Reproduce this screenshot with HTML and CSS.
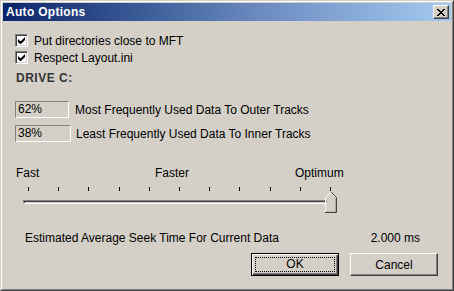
FILE: index.html
```html
<!DOCTYPE html>
<html lang="en">
<head>
    <meta charset="UTF-8">
    <title>Auto Options</title>
    <link rel="stylesheet" href="styles.css">
</head>
<body>

<div class="window">
    <div class="window-inner">
        <div class="titlebar">
            <span class="title">Auto Options</span>
            <span class="close-btn">
                <svg width="8" height="7" viewBox="0 0 8 7">
                    <path d="M0 0h2v1h-2z M6 0h2v1h-2z M1 1h2v1h-2z M5 1h2v1h-2z M2 2h4v1h-4z M3 3h2v1h-2z M2 4h4v1h-4z M1 5h2v1h-2z M5 5h2v1h-2z M0 6h2v1h-2z M6 6h2v1h-2z" fill="#000"/>
                </svg>
            </span>
        </div>

        <div class="content">
            <!-- OPTIONS -->
            <div class="check-row">
                <span class="checkbox"><svg width="7" height="7" viewBox="0 0 7 7"><path d="M0 2v3l2 2h1l4-4v-3l-4 4h-1z" fill="#000"/></svg></span>
                <span>Put directories close to MFT</span>
            </div>
            <div class="check-row">
                <span class="checkbox"><svg width="7" height="7" viewBox="0 0 7 7"><path d="M0 2v3l2 2h1l4-4v-3l-4 4h-1z" fill="#000"/></svg></span>
                <span>Respect Layout.ini</span>
            </div>

            <div class="drive">DRIVE C:</div>

            <div class="pct-row">
                <span class="pct-box">62%</span>
                <span>Most Frequently Used Data To Outer Tracks</span>
            </div>
            <div class="pct-row">
                <span class="pct-box wide">38%</span>
                <span>Least Frequently Used Data To Inner Tracks</span>
            </div>

            <!-- SLIDER -->
            <div class="slider-labels">
                <span class="lbl-fast">Fast</span>
                <span class="lbl-faster">Faster</span>
                <span>Optimum</span>
            </div>
            <div class="ticks">
                <i></i><i></i><i></i><i></i><i></i><i></i><i></i><i></i><i></i><i></i><i></i>
            </div>
            <div class="slider">
                <div class="track"></div>
                <svg class="thumb" width="12" height="21" viewBox="0 0 12 21">
                    <path d="M0.5 20.5V5.5L5.5 0.5L10.5 5.5" fill="none" stroke="#fff"/>
                    <path d="M1 20h10V6" fill="none" stroke="#808080" stroke-width="1"/>
                    <path d="M0 20.5h11.5V5.5L6 0" fill="none" stroke="#404040"/>
                    <path d="M1.5 19.5V6L5.5 2L9.5 6V19.5z" fill="#d4d0c8"/>
                </svg>
            </div>

            <div class="seek-row">
                <span>Estimated Average Seek Time For Current Data</span>
                <span>2.000 ms</span>
            </div>

            <!-- TOMBOL -->
            <div class="button-group">
                <button class="btn default"><span class="focus">OK</span></button>
                <button class="btn">Cancel</button>
            </div>
        </div>
    </div>
</div>

</body>
</html>
```

FILE: styles.css
```css
body {
    margin: 0;
    font-family: "Liberation Sans", Arial, sans-serif;
    font-size: 12px;
    color: #000;
    background-color: #d4d0c8;
}

.window {
    width: 454px;
    height: 291px;
    box-sizing: border-box;
    background-color: #d4d0c8;
    border: 1px solid;
    border-color: #d4d0c8 #404040 #404040 #d4d0c8;
}

.window-inner {
    height: 100%;
    box-sizing: border-box;
    border: 1px solid;
    border-color: #fff #808080 #808080 #fff;
    padding: 1px;
}

.titlebar {
    height: 18px;
    display: flex;
    align-items: center;
    justify-content: space-between;
    padding: 0 2px 0 3px;
    background: linear-gradient(to right, #0a246a, #3a5a96 30%, #6f8fc4 60%, #a6caf0);
}

.title {
    color: #fff;
    font-weight: bold;
    font-size: 12px;
    letter-spacing: 0.3px;
}

.close-btn {
    width: 16px;
    height: 14px;
    box-sizing: border-box;
    background-color: #d4d0c8;
    border: 1px solid;
    border-color: #fff #404040 #404040 #fff;
    box-shadow: inset -1px -1px 0 #808080;
    display: flex;
    align-items: center;
    justify-content: center;
}

.content {
    padding: 11px 13px 0 12px;
}

.check-row {
    height: 17px;
    display: flex;
    align-items: center;
}

.checkbox {
    width: 13px;
    height: 13px;
    box-sizing: border-box;
    margin-right: 6px;
    background-color: #fff;
    border: 1px solid;
    border-color: #808080 #fff #fff #808080;
    box-shadow: inset 1px 1px 0 #404040, inset -1px -1px 0 #d4d0c8;
    display: flex;
    align-items: center;
    justify-content: center;
}

.drive {
    margin-top: 4px;
    height: 16px;
    line-height: 16px;
    font-weight: bold;
    color: #333;
    letter-spacing: 0.5px;
    padding-left: 1px;
}

.pct-row {
    display: flex;
    align-items: center;
    height: 17px;
    margin-top: 7px;
}

.drive + .pct-row {
    margin-top: 15px;
}

.pct-box {
    width: 54px;
    height: 17px;
    box-sizing: border-box;
    border: 1px solid;
    border-color: #808080 #fff #fff #808080;
    padding-left: 2px;
    line-height: 15px;
    margin-right: 6px;
}

.pct-box.wide {
    width: 56px;
    margin-right: 5px;
}

.slider-labels {
    margin-top: 24px;
    height: 14px;
    line-height: 14px;
    display: flex;
    padding-left: 1px;
}

.lbl-fast {
    width: 139px;
}

.lbl-faster {
    width: 140px;
}

.ticks {
    margin: 7px 0 0 13px;
    width: 303px;
    height: 4px;
    display: flex;
    justify-content: space-between;
}

.ticks i {
    width: 1px;
    height: 4px;
    background-color: #000;
}

.slider {
    position: relative;
    height: 22px;
    margin-left: 8px;
}

.track {
    position: absolute;
    top: 9px;
    left: 0;
    width: 308px;
    height: 4px;
    box-sizing: border-box;
    border: 1px solid;
    border-color: #808080 #fff #fff #808080;
    box-shadow: inset 1px 1px 0 #404040;
}

.thumb {
    position: absolute;
    top: 1px;
    left: 302px;
}

.seek-row {
    margin-top: 18px;
    display: flex;
    justify-content: space-between;
    width: 405px;
    padding-left: 10px;
    box-sizing: border-box;
    height: 14px;
    line-height: 14px;
}

.button-group {
    margin-top: 8px;
    display: flex;
    justify-content: flex-end;
    gap: 11px;
}

.btn {
    width: 88px;
    height: 23px;
    box-sizing: border-box;
    padding: 0;
    font-family: "Liberation Sans", Arial, sans-serif;
    font-size: 12px;
    color: #000;
    background-color: #d4d0c8;
    border: 1px solid;
    border-color: #fff #404040 #404040 #fff;
    box-shadow: inset -1px -1px 0 #808080;
}

.btn.default {
    border: 1px solid #000;
    box-shadow: inset 1px 1px 0 #fff, inset -1px -1px 0 #404040, inset -2px -2px 0 #808080;
    padding: 3px;
}

.focus {
    display: block;
    height: 100%;
    box-sizing: border-box;
    border: 1px dotted #000;
    line-height: 13px;
}
```
